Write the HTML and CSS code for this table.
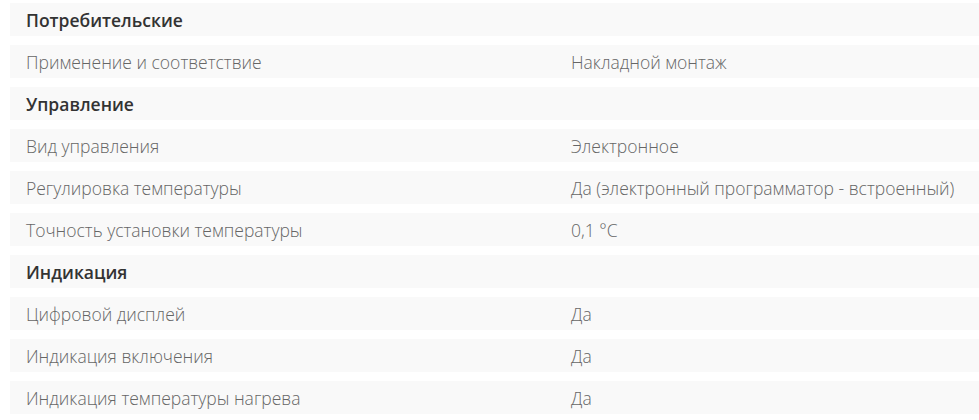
FILE: index.html
```html
<!DOCTYPE html>
<html lang="ru">
<head>
<meta charset="utf-8">
<link rel="stylesheet" href="styles.css">
</head>
<body>
<div class="specs">
  <div class="row head"><span class="label">Потребительские</span></div>
  <div class="row"><span class="label">Применение и соответствие</span><span class="value">Накладной монтаж</span></div>
  <div class="row head"><span class="label">Управление</span></div>
  <div class="row"><span class="label">Вид управления</span><span class="value">Электронное</span></div>
  <div class="row"><span class="label">Регулировка температуры</span><span class="value">Да (электронный программатор - встроенный)</span></div>
  <div class="row"><span class="label">Точность установки температуры</span><span class="value">0,1 °C</span></div>
  <div class="row head"><span class="label">Индикация</span></div>
  <div class="row"><span class="label">Цифровой дисплей</span><span class="value">Да</span></div>
  <div class="row"><span class="label">Индикация включения</span><span class="value">Да</span></div>
  <div class="row"><span class="label">Индикация температуры нагрева</span><span class="value">Да</span></div>
</div>
</body>
</html>
```
FILE: styles.css
```css
html, body {
  margin: 0;
  padding: 0;
  background: #ffffff;
}
body {
  padding: 3px 0 0 10px;
  font-family: "Open Sans", "Noto Sans", sans-serif;
  font-size: 17.5px;
  overflow: hidden;
}
.specs {
  display: flex;
  flex-direction: column;
  gap: 9px;
}
.row {
  display: grid;
  grid-template-columns: 545px 1fr;
  align-items: center;
  height: 33px;
  padding-left: 16px;
  background: #f9f9f9;
  color: #666666;
  font-weight: 300;
  white-space: nowrap;
}
.row.head {
  color: #333333;
  font-weight: 600;
}
```
